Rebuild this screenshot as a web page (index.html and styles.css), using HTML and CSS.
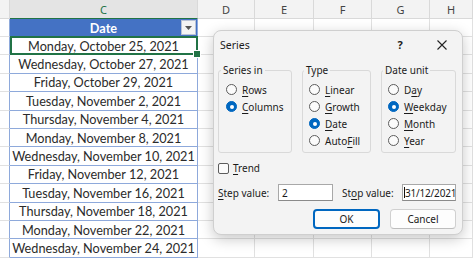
FILE: index.html
```html
<!DOCTYPE html>
<html>
<head>
<meta charset="utf-8">
<link rel="stylesheet" href="styles.css">
</head>
<body>
<div class="sheet">
  <div class="row colhead">
    <div class="cell"></div>
    <div class="cell selcol">C</div>
    <div class="cell">D</div>
    <div class="cell">E</div>
    <div class="cell">F</div>
    <div class="cell">G</div>
    <div class="cell">H</div>
  </div>
  <div class="row thead">
    <div class="cell edge"></div>
    <div class="cell tc th">Date<span class="filter"><svg width="7" height="4" viewBox="0 0 7 4"><path d="M0 0H7L3.5 4Z" fill="#555"/></svg></span></div>
    <div class="cell"></div><div class="cell"></div><div class="cell"></div><div class="cell"></div><div class="cell"></div>
  </div>
  <div class="row data">
    <div class="cell edge"></div>
    <div class="cell tc active">Monday, October 25, 2021</div>
    <div class="cell"></div><div class="cell"></div><div class="cell"></div><div class="cell"></div><div class="cell"></div>
  </div>
  <div class="row data">
    <div class="cell edge"></div>
    <div class="cell tc">Wednesday, October 27, 2021</div>
    <div class="cell"></div><div class="cell"></div><div class="cell"></div><div class="cell"></div><div class="cell"></div>
  </div>
  <div class="row data">
    <div class="cell edge"></div>
    <div class="cell tc">Friday, October 29, 2021</div>
    <div class="cell"></div><div class="cell"></div><div class="cell"></div><div class="cell"></div><div class="cell"></div>
  </div>
  <div class="row data">
    <div class="cell edge"></div>
    <div class="cell tc">Tuesday, November 2, 2021</div>
    <div class="cell"></div><div class="cell"></div><div class="cell"></div><div class="cell"></div><div class="cell"></div>
  </div>
  <div class="row data">
    <div class="cell edge"></div>
    <div class="cell tc">Thursday, November 4, 2021</div>
    <div class="cell"></div><div class="cell"></div><div class="cell"></div><div class="cell"></div><div class="cell"></div>
  </div>
  <div class="row data">
    <div class="cell edge"></div>
    <div class="cell tc">Monday, November 8, 2021</div>
    <div class="cell"></div><div class="cell"></div><div class="cell"></div><div class="cell"></div><div class="cell"></div>
  </div>
  <div class="row data">
    <div class="cell edge"></div>
    <div class="cell tc">Wednesday, November 10, 2021</div>
    <div class="cell"></div><div class="cell"></div><div class="cell"></div><div class="cell"></div><div class="cell"></div>
  </div>
  <div class="row data">
    <div class="cell edge"></div>
    <div class="cell tc">Friday, November 12, 2021</div>
    <div class="cell"></div><div class="cell"></div><div class="cell"></div><div class="cell"></div><div class="cell"></div>
  </div>
  <div class="row data">
    <div class="cell edge"></div>
    <div class="cell tc">Tuesday, November 16, 2021</div>
    <div class="cell"></div><div class="cell"></div><div class="cell"></div><div class="cell"></div><div class="cell"></div>
  </div>
  <div class="row data">
    <div class="cell edge"></div>
    <div class="cell tc">Thursday, November 18, 2021</div>
    <div class="cell"></div><div class="cell"></div><div class="cell"></div><div class="cell"></div><div class="cell"></div>
  </div>
  <div class="row data">
    <div class="cell edge"></div>
    <div class="cell tc">Monday, November 22, 2021</div>
    <div class="cell"></div><div class="cell"></div><div class="cell"></div><div class="cell"></div><div class="cell"></div>
  </div>
  <div class="row data">
    <div class="cell edge"></div>
    <div class="cell tc">Wednesday, November 24, 2021</div>
    <div class="cell"></div><div class="cell"></div><div class="cell"></div><div class="cell"></div><div class="cell"></div>
  </div>
</div>

<div class="dialog">
  <div class="titlebar">
    <span class="title">Series</span>
    <span class="help">?</span>
    <svg class="close" width="10" height="10" viewBox="0 0 10 10"><path d="M0.5 0.5L9.5 9.5M9.5 0.5L0.5 9.5" stroke="#222" stroke-width="1.1" fill="none"/></svg>
  </div>
  <div class="groups">
    <fieldset class="group g1">
      <legend>Series in</legend>
      <div class="opts">
        <div class="opt"><span class="radio"></span><span><u>R</u>ows</span></div>
        <div class="opt"><span class="radio on"></span><span><u>C</u>olumns</span></div>
      </div>
    </fieldset>
    <fieldset class="group g2">
      <legend>Type</legend>
      <div class="opts">
        <div class="opt"><span class="radio"></span><span><u>L</u>inear</span></div>
        <div class="opt"><span class="radio"></span><span><u>G</u>rowth</span></div>
        <div class="opt"><span class="radio on"></span><span><u>D</u>ate</span></div>
        <div class="opt"><span class="radio"></span><span>Auto<u>F</u>ill</span></div>
      </div>
    </fieldset>
    <fieldset class="group g3">
      <legend>Date unit</legend>
      <div class="opts">
        <div class="opt"><span class="radio"></span><span>D<u>a</u>y</span></div>
        <div class="opt"><span class="radio on"></span><span><u>W</u>eekday</span></div>
        <div class="opt"><span class="radio"></span><span><u>M</u>onth</span></div>
        <div class="opt"><span class="radio"></span><span><u>Y</u>ear</span></div>
      </div>
    </fieldset>
  </div>
  <div class="trend"><span class="check"></span><span><u>T</u>rend</span></div>
  <div class="values">
    <span class="vlabel"><u>S</u>tep value:</span>
    <span class="input">2</span>
    <span class="vlabel stop">St<u>o</u>p value:</span>
    <span class="input last"><span class="caret"></span>31/12/2021</span>
  </div>
  <div class="buttons">
    <span class="btn ok">OK</span>
    <span class="btn">Cancel</span>
  </div>
</div>
</body>
</html>
```

FILE: styles.css
```css
* { box-sizing: border-box; margin: 0; padding: 0; }

body {
  width: 473px;
  height: 258px;
  overflow: hidden;
  background: #fff;
  position: relative;
  font-family: "Lato", "Liberation Sans", sans-serif;
}

.sheet {
  display: flex;
  flex-direction: column;
}

.row {
  display: grid;
  grid-template-columns: 10px 188px 57px 59px 58px 58px 43px;
  height: 18.4px;
  flex: none;
}

.cell {
  border-right: 1px solid #e1e1e1;
  border-bottom: 1px solid #e1e1e1;
}

.colhead {
  height: 19px;
  background: #f3f3f3;
}

.colhead .cell {
  display: flex;
  align-items: center;
  justify-content: center;
  font-family: "Noto Sans", sans-serif;
  font-size: 11px;
  color: #444;
  border-color: #d9d9d9;
}

.colhead .selcol {
  background: #e4e4e4;
  color: #217346;
  border-bottom: 1px solid #217346;
}

.thead {
  height: 18px;
}

.edge {
  border-right-color: #8ea9db;
}

.tc {
  border-right-color: #8ea9db;
  border-bottom-color: #8ea9db;
  display: flex;
  align-items: center;
  justify-content: center;
  font-size: 12.7px;
  color: #2b2b2b;
  white-space: nowrap;
}

.th {
  position: relative;
  background: #4472c4;
  color: #fff;
  font-weight: bold;
  border-bottom-color: #4472c4;
}

.filter {
  position: absolute;
  right: 1px;
  top: 1px;
  width: 15px;
  height: 15px;
  background: #f4f4f4;
  border: 1px solid #b9c3d6;
  display: flex;
  align-items: center;
  justify-content: center;
}

.active {
  position: relative;
}

.active::after {
  content: "";
  position: absolute;
  left: 0;
  top: -1px;
  right: -1px;
  bottom: -1px;
  border: 2px solid #217346;
}

.active::before {
  content: "";
  position: absolute;
  right: -4px;
  bottom: -4px;
  width: 6px;
  height: 6px;
  background: #217346;
  border: 1px solid #fff;
  z-index: 1;
}

/* Dialog */
.dialog {
  position: absolute;
  left: 213px;
  top: 30px;
  width: 250px;
  height: 205px;
  padding: 0 6px 0 4px;
  background: #f3f3f3;
  border: 1px solid #cfcfcf;
  border-radius: 8px;
  box-shadow: 0 4px 14px rgba(0, 0, 0, 0.22);
  font-family: "Noto Sans", sans-serif;
  font-size: 10px;
  color: #1b1b1b;
  display: flex;
  flex-direction: column;
}

.titlebar {
  margin: 0 -6px 0 -4px;
  height: 27px;
  display: flex;
  align-items: center;
  padding-left: 6px;
}

.title {
  flex: 1;
  font-size: 10.5px;
}

.help {
  width: 20px;
  text-align: center;
  font-size: 11px;
  font-weight: bold;
  margin-right: 27px;
}

.close {
  margin-right: 15px;
}

.groups {
  display: flex;
  gap: 10px;
  margin-top: 6px;
}

.group {
  border: 1px solid #d9d9d9;
  border-radius: 3px;
  height: 89px;
  padding: 0 0 0 7px;
}

.g1 { width: 74px; padding-left: 7px; }
.g2 { width: 69px; padding-left: 6px; }
.g3 { width: 75px; padding-left: 6px; }

legend {
  margin-left: -5px;
  padding: 0 2px;
  line-height: 13px;
  font-size: 10px;
}

.opts {
  padding-top: 4px;
}

.opt {
  display: flex;
  align-items: center;
  gap: 5px;
  height: 17px;
  white-space: nowrap;
}

.radio {
  width: 11px;
  height: 11px;
  border-radius: 50%;
  border: 1px solid #5c5c5c;
  background: #fbfbfb;
  flex: none;
  position: relative;
}

.radio.on {
  background: #0067c0;
  border-color: #0067c0;
}

.radio.on::after {
  content: "";
  position: absolute;
  left: 2.5px;
  top: 2.5px;
  width: 4px;
  height: 4px;
  border-radius: 50%;
  background: #fff;
}

u {
  text-underline-offset: 1.5px;
}

.trend {
  margin-top: 7px;
  height: 16px;
  display: flex;
  align-items: center;
  gap: 4px;
}

.check {
  width: 11px;
  height: 11px;
  border: 1px solid #5c5c5c;
  border-radius: 2px;
  background: #fbfbfb;
}

.values {
  margin-top: 8px;
  height: 17px;
  display: flex;
  align-items: center;
}

.vlabel {
  width: 60px;
  white-space: nowrap;
}

.vlabel.stop {
  margin-left: 9px;
}

.input {
  width: 55px;
  height: 17px;
  background: #fff;
  border: 1px solid #a8a8a8;
  border-bottom-color: #8a8a8a;
  padding-left: 3px;
  display: flex;
  align-items: center;
  font-size: 10px;
}

.input.last {
  width: 54px;
  padding-left: 1px;
  letter-spacing: -0.2px;
  overflow: hidden;
  white-space: nowrap;
}

.caret {
  width: 1px;
  height: 11px;
  background: #111;
  flex: none;
}

.buttons {
  margin-top: 8px;
  display: flex;
  justify-content: flex-end;
  gap: 10px;
}

.btn {
  width: 66px;
  height: 20px;
  border: 1px solid #d0d0d0;
  border-bottom-color: #bdbdbd;
  border-radius: 4px;
  background: #fdfdfd;
  display: flex;
  align-items: center;
  justify-content: center;
  font-size: 10px;
}

.btn.ok {
  width: 67px;
  border: 2px solid #0067c0;
}
```
